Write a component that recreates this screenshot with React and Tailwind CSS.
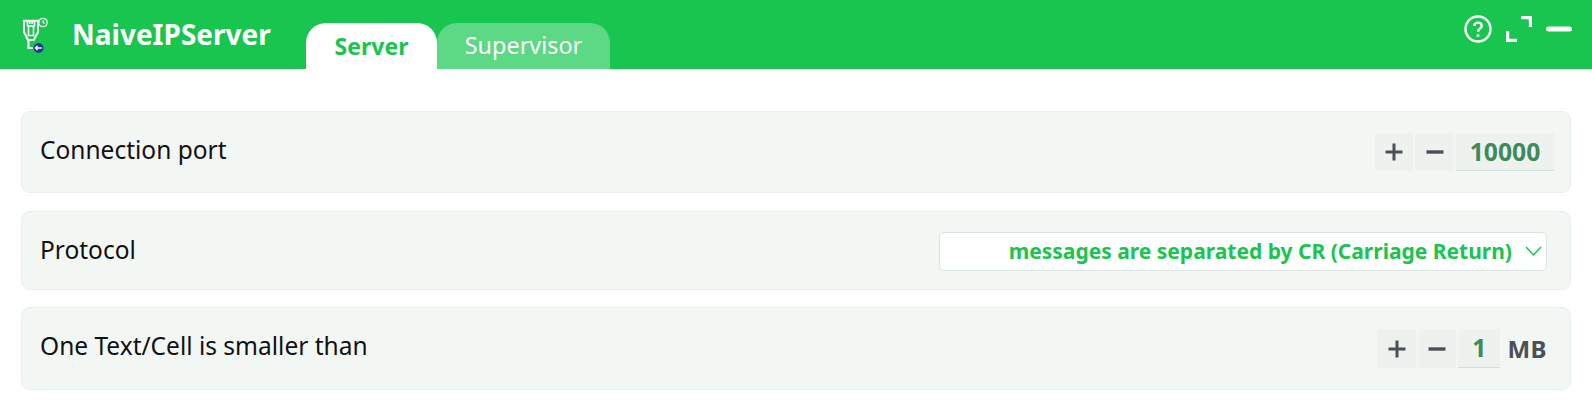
import React from 'react';

// viewBox is in page coordinates so the drawing lines up with the title bar
function AppIcon() {
  return (
    <svg width="32" height="42" viewBox="20 14 32 42" fill="none" className="mt-[14px] shrink-0">
      {/* ethernet plug */}
      <path d="M24 20.8 H38 V32 L33.8 40 H28 L24 32 Z" stroke="#fff" strokeWidth="2" />
      <path d="M27.5 21 V26 H34.5 V21 M29.8 21 V24 M32.2 21 V24 M28.5 26 V35.5 H33.5 V26" stroke="#fff" strokeWidth="1.6" />
      <path d="M28.5 40 V48 H33" stroke="#fff" strokeWidth="2" />
      {/* clock */}
      <circle cx="43" cy="22.5" r="4.2" stroke="#fff" strokeWidth="1.2" />
      <path d="M43 20 V23 H45" stroke="#fff" strokeWidth="1" />
      {/* arrow badge */}
      <circle cx="38.5" cy="48" r="5" fill="#1e3a9f" />
      <path d="M35.5 48 H41.8 M37.6 46 L35.5 48 L37.6 50" stroke="#fff" strokeWidth="1.4" />
    </svg>
  );
}

function StepButton({ children, className }) {
  return (
    <div className={`flex items-center justify-center bg-[#edf2ef] text-[#4b5058] ${className}`}>
      {children}
    </div>
  );
}

function Plus() {
  return (
    <svg width="18" height="18" viewBox="0 0 18 18">
      <path d="M9 0.5 V17.5 M0.5 9 H17.5" stroke="#4b5058" strokeWidth="3" />
    </svg>
  );
}

function Minus() {
  return (
    <svg width="18" height="4" viewBox="0 0 18 4">
      <path d="M0.5 2 H17.5" stroke="#4b5058" strokeWidth="3.4" />
    </svg>
  );
}

function SettingCard({ label, className, labelClass, children }) {
  return (
    <div className={`flex items-center justify-between rounded-[9px] border border-[#e8eeea] bg-[#f3f7f4] pl-[18px] pr-[14px] ${className}`}>
      <span className={`text-[24.5px] leading-[32px] text-[#111] ${labelClass}`}>{label}</span>
      {children}
    </div>
  );
}

export default function App() {
  return (
    <div className="w-[1592px] h-[414px] overflow-hidden bg-white font-['Noto_Sans',sans-serif]">
      {/* title bar */}
      <div className="flex h-[69px] items-stretch bg-[#18c54f] pl-[20px] pr-[20px]">
        <div className="flex items-start w-[52px]">
          <AppIcon />
        </div>
        <div className="pt-[15px] w-[234px] text-[28px] leading-[38px] font-bold text-white">NaiveIPServer</div>
        <div className="flex items-end">
          <div className="flex h-[46px] w-[131px] items-center justify-center rounded-t-[20px] bg-white text-[23px] font-bold text-[#18c54f]">Server</div>
          <div className="flex h-[46px] w-[173px] items-center justify-center rounded-t-[20px] bg-[#5dd884] text-[23.4px] text-white">Supervisor</div>
        </div>
        <div className="ml-auto flex items-center gap-[14px] h-[58px]">
          <svg width="28" height="28" viewBox="0 0 28 28" fill="none" stroke="#fff">
            <circle cx="14" cy="14" r="12.5" strokeWidth="2.4" />
            <path d="M10.3 11 Q10.5 7.6 14 7.6 Q17.7 7.6 17.7 10.8 Q17.7 12.6 15.8 13.8 Q14 15 14 17" strokeWidth="2.4" />
            <circle cx="14" cy="20.4" r="1.5" fill="#fff" stroke="none" />
          </svg>
          <svg width="26" height="26" viewBox="0 0 26 26" fill="none" stroke="#fff" strokeWidth="3.2">
            <path d="M15 1.6 H24.4 V11" />
            <path d="M1.6 15 V24.4 H11" />
          </svg>
          <svg width="26" height="6" viewBox="0 0 26 6" className="-mt-[1px]">
            <rect x="0" y="0.5" width="26" height="5" rx="2.5" fill="#fff" />
          </svg>
        </div>
      </div>

      {/* settings */}
      <div className="flex flex-col px-[21px] pt-[42px]">
        <SettingCard label="Connection port" className="h-[82px]" labelClass="-mt-[5px]">
          <div className="flex gap-[2px] pr-[2px]">
            <StepButton className="h-[38px] w-[38px]"><Plus /></StepButton>
            <StepButton className="h-[38px] w-[39px]"><Minus /></StepButton>
            <div className="flex h-[38px] w-[98px] items-center justify-center border-b border-[#d3e0d9] bg-[#edf2ef] text-[24.7px] font-bold text-[#3f8a58]">10000</div>
          </div>
        </SettingCard>

        <SettingCard label="Protocol" className="mt-[18px] h-[79px]" labelClass="-mt-[2px]">
          <div className="mr-[9px] mt-[1px] flex h-[39px] w-[608px] items-center justify-end rounded-[5px] border border-[#d8e5de] bg-white pr-[4px]">
            <span className="mt-[2px] text-[21px] font-bold text-[#18c54f]">messages are separated by CR (Carriage Return)</span>
            <svg width="17" height="10" viewBox="0 0 17 10" fill="none" stroke="#18c54f" strokeWidth="1.4" className="ml-[13px]">
              <path d="M1 1 L8.5 9 L16 1" />
            </svg>
          </div>
        </SettingCard>

        <SettingCard label="One Text/Cell is smaller than" className="mt-[17px] h-[83px]" labelClass="-mt-[5px]">
          <div className="flex items-center pr-[9px]">
            <StepButton className="h-[39px] w-[39px]"><Plus /></StepButton>
            <StepButton className="ml-[2px] h-[39px] w-[38px]"><Minus /></StepButton>
            <div className="ml-[2px] flex h-[39px] w-[42px] items-center justify-center border-b border-[#d3e0d9] bg-[#edf2ef] text-[24.7px] font-bold text-[#3f8a58]">1</div>
            <span className="ml-[7px] text-[24px] font-bold tracking-[0.5px] text-[#4b5058]">MB</span>
          </div>
        </SettingCard>
      </div>
    </div>
  );
}
